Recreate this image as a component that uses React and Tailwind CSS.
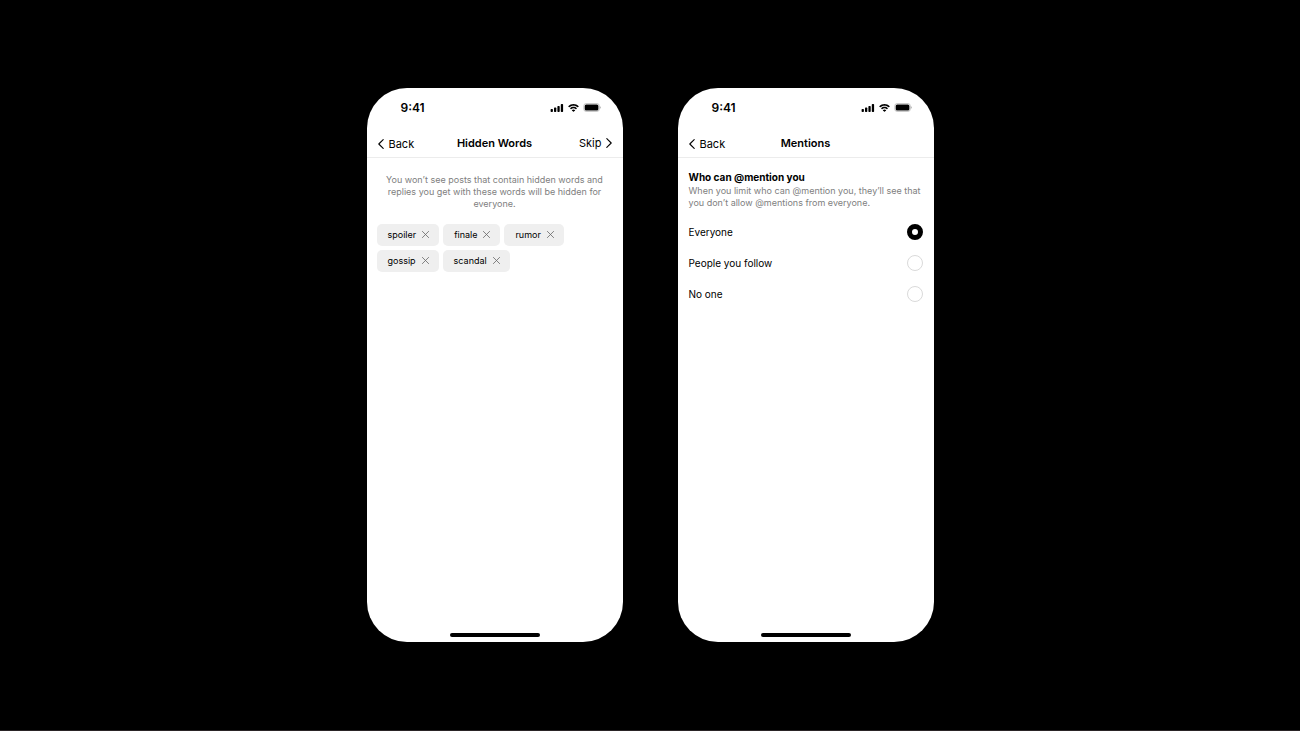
import React, { useState } from 'react';

function Chevron({ flip }) {
  return (
    <svg viewBox="0 0 6 10" className="h-[10px] w-[6px]" fill="none" stroke="currentColor" strokeWidth="1.1" strokeLinecap="round" strokeLinejoin="round">
      <path d={flip ? 'M0.8 0.6 5.2 5 0.8 9.4' : 'M5.2 0.6 0.8 5l4.4 4.4'} />
    </svg>
  );
}

function StatusBar() {
  return (
    <div className="flex h-10 items-center justify-between pr-[22px] pl-[34px]">
      <span className="text-[12px] leading-4 font-semibold">9:41</span>
      <div className="flex items-center gap-1">
        <svg viewBox="0 0 14 8" className="h-2 w-[14px]" fill="currentColor">
          <rect x="0.6" y="5" width="2.3" height="3" rx="0.7" />
          <rect x="4" y="3.6" width="2.3" height="4.4" rx="0.7" />
          <rect x="7.4" y="2" width="2.3" height="6" rx="0.7" />
          <rect x="10.8" y="0" width="2.3" height="8" rx="0.7" />
        </svg>
        <svg viewBox="0 0 17 12" className="h-2 w-[11px]" fill="currentColor">
          <path d="M8.5 2.4c2.4 0 4.7.9 6.4 2.6.1.1.3.1.4 0l1.3-1.3c.1-.1.1-.3 0-.4C12.1-1.1 4.9-1.1.4 3.3c-.1.1-.1.3 0 .4L1.7 5c.1.1.3.1.4 0C3.8 3.3 6.1 2.4 8.5 2.4z" />
          <path d="M8.5 6.500c1.3 0 2.6.5 3.5 1.4.1.1.3.1.5 0l1.2-1.3c.1-.1.1-.3 0-.4-2.9-2.8-7.5-2.8-10.4 0-.1.1-.1.3 0 .4l1.2 1.3c.1.1.3.1.5 0 .9-.9 2.2-1.4 3.5-1.4z" />
          <path d="M11 9.3c.1.1.1.3 0 .4l-2.3 2.2c-.1.1-.3.1-.4 0L6 9.7c-.1-.1-.1-.3 0-.4 1.4-1.2 3.6-1.2 5 0z" />
        </svg>
        <svg viewBox="0 0 18 9" className="h-[9px] w-[18px]" fill="currentColor">
          <rect x="0.8" y="0.5" width="15.5" height="8" rx="2.4" fill="none" stroke="currentColor" strokeOpacity="0.3" strokeWidth="0.7" />
          <rect x="1.7" y="1.5" width="13.7" height="6" rx="1.5" />
          <path d="M16.9 3.3v2.4c.5-.2.8-.7.8-1.2s-.3-1-.8-1.2z" fillOpacity="0.4" />
        </svg>
      </div>
    </div>
  );
}

function Phone({ title, skip, children }) {
  return (
    <section className="flex aspect-[375/812] w-64 flex-col rounded-[40px] bg-white">
      <StatusBar />
      <header className="grid h-[30px] grid-cols-[1fr_auto_1fr] items-center border-b border-[#ececec] px-[11px] pt-px">
        <button type="button" className="flex items-center gap-[5px] justify-self-start pt-[2px] text-[11px] leading-4">
          <Chevron />
          Back
        </button>
        <h1 className="text-[11px] leading-4 font-semibold">{title}</h1>
        {skip && (
          <button type="button" className="flex items-center gap-1 justify-self-end text-[11px] leading-4">
            Skip
            <Chevron flip />
          </button>
        )}
      </header>
      <main className="flex-1">{children}</main>
      <div className="mx-auto mb-[5px] h-[4px] w-[90px] rounded-full bg-black" />
    </section>
  );
}

function HiddenWords() {
  const [words, setWords] = useState(['spoiler', 'finale', 'rumor', 'gossip', 'scandal']);

  return (
    <div className="px-[10px] pt-4">
      <p className="px-2 text-center text-[9px] leading-3 text-[#808080]">
        You won’t see posts that contain hidden words and replies you get with these words will be hidden for everyone.
      </p>
      <ul className="mt-[14px] flex flex-wrap gap-1">
        {words.map(word => (
          <li key={word} className="flex h-[22px] items-center gap-[6px] rounded-[5px] bg-[#efefef] pr-[10px] pl-[11px] text-[9px] leading-3">
            {word}
            <button type="button" aria-label={`Remove ${word}`} onClick={() => setWords(words.filter(w => w !== word))}>
              <svg viewBox="0 0 7 7" className="h-[7px] w-[7px]" fill="none" stroke="#666666" strokeWidth="0.8" strokeLinecap="round">
                <path d="M0.4 0.4l6.2 6.2M6.6 0.4L0.4 6.6" />
              </svg>
            </button>
          </li>
        ))}
      </ul>
    </div>
  );
}

function Mentions() {
  const [selected, setSelected] = useState('Everyone');
  const options = ['Everyone', 'People you follow', 'No one'];

  return (
    <div className="px-[11px] pt-3">
      <h2 id="mention-heading" className="text-[10px] leading-[14px] font-bold">Who can @mention you</h2>
      <p className="mt-px text-[9px] leading-3 text-[#808080]">
        When you limit who can @mention you, they’ll see that you don’t allow @mentions from everyone.
      </p>
      <div role="radiogroup" aria-labelledby="mention-heading" className="mt-2">
        {options.map(option => (
          <label key={option} className="flex h-[31px] items-center justify-between text-[10px] leading-4">
            {option}
            <input
              type="radio"
              name="mentions"
              value={option}
              checked={selected === option}
              onChange={() => setSelected(option)}
              className="h-4 w-4 appearance-none rounded-full border border-[#dadada] bg-white checked:border-[5px] checked:border-black"
            />
          </label>
        ))}
      </div>
    </div>
  );
}

export default function App() {
  return (
    <div className="flex min-h-screen flex-wrap items-center justify-center gap-[55px] border-b border-[#2a2426] bg-black font-['Inter',sans-serif] text-black">
      <Phone title="Hidden Words" skip>
        <HiddenWords />
      </Phone>
      <Phone title="Mentions">
        <Mentions />
      </Phone>
    </div>
  );
}
